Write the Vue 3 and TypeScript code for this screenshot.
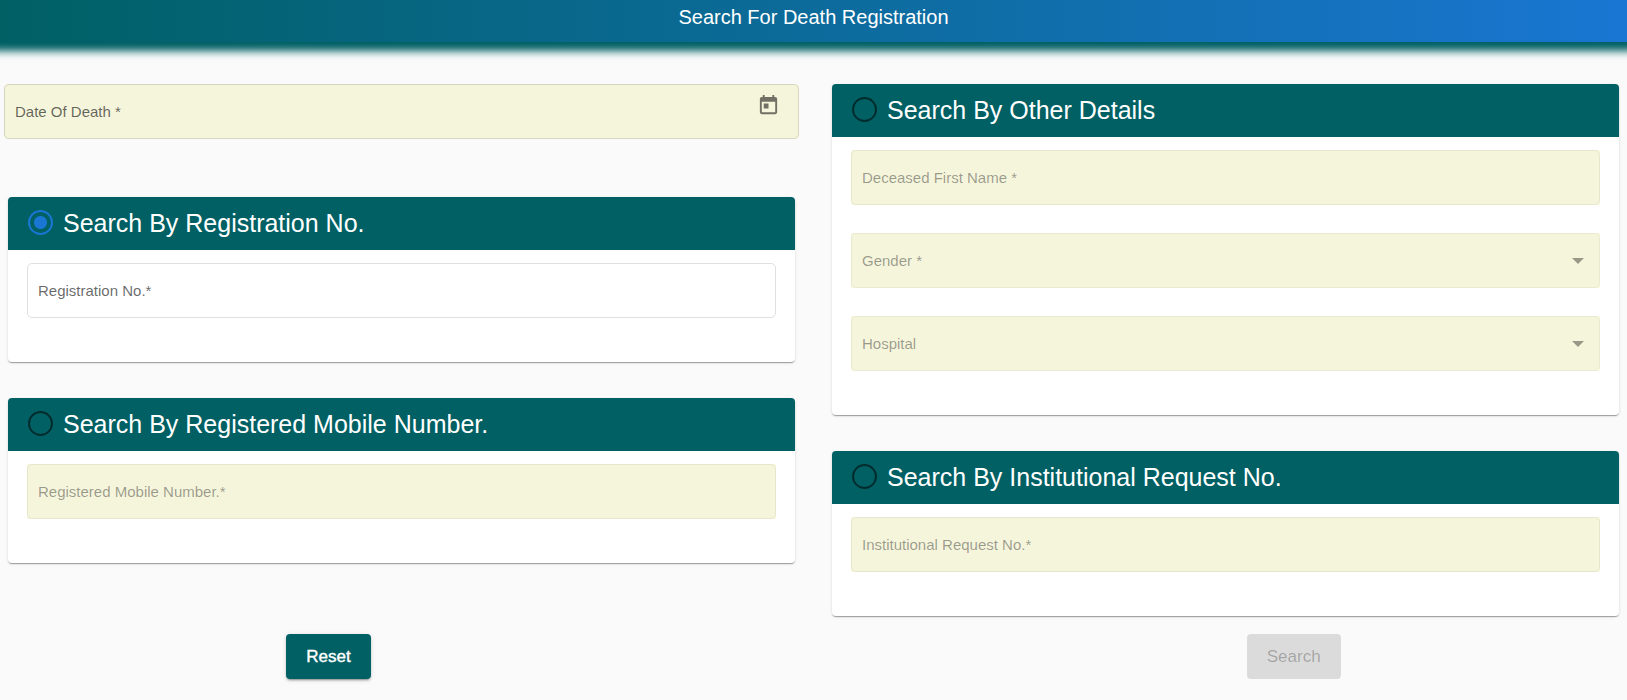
<script setup lang="ts">
import { computed, reactive, ref } from 'vue'

type Mode = 'registration' | 'mobile' | 'details' | 'institution'
type FieldKey = 'registrationNo' | 'mobileNo' | 'firstName' | 'gender' | 'hospital' | 'requestNo'

interface Field {
  key: FieldKey
  label: string
  options?: string[]
}

interface Panel {
  mode: Mode
  title: string
  fields: Field[]
}

const leftPanels: Panel[] = [
  {
    mode: 'registration',
    title: 'Search By Registration No.',
    fields: [{ key: 'registrationNo', label: 'Registration No.*' }],
  },
  {
    mode: 'mobile',
    title: 'Search By Registered Mobile Number.',
    fields: [{ key: 'mobileNo', label: 'Registered Mobile Number.*' }],
  },
]

const rightPanels: Panel[] = [
  {
    mode: 'details',
    title: 'Search By Other Details',
    fields: [
      { key: 'firstName', label: 'Deceased First Name *' },
      { key: 'gender', label: 'Gender *', options: [] },
      { key: 'hospital', label: 'Hospital', options: [] },
    ],
  },
  {
    mode: 'institution',
    title: 'Search By Institutional Request No.',
    fields: [{ key: 'requestNo', label: 'Institutional Request No.*' }],
  },
]

const columns = [leftPanels, rightPanels]

const mode = ref<Mode>('registration')
const dateOfDeath = ref('')
const values = reactive<Record<FieldKey, string>>({
  registrationNo: '',
  mobileNo: '',
  firstName: '',
  gender: '',
  hospital: '',
  requestNo: '',
})

const canSearch = computed(() => {
  if (!dateOfDeath.value) return false
  switch (mode.value) {
    case 'registration':
      return values.registrationNo !== ''
    case 'mobile':
      return values.mobileNo !== ''
    case 'details':
      return values.firstName !== '' && values.gender !== ''
    default:
      return values.requestNo !== ''
  }
})

function reset() {
  mode.value = 'registration'
  dateOfDeath.value = ''
  for (const key of Object.keys(values) as FieldKey[]) values[key] = ''
}
</script>

<template>
  <div class="page">
    <header class="banner">
      <h1>Search For Death Registration</h1>
    </header>

    <form @submit.prevent>
      <div class="columns">
        <div v-for="(panels, index) in columns" :key="index" class="column">
          <div v-if="index === 0" class="field date shaded">
            <input id="dateOfDeath" v-model="dateOfDeath" type="text" />
            <label v-show="!dateOfDeath" for="dateOfDeath">Date Of Death *</label>
            <button type="button" class="calendar" aria-label="Open calendar">
              <svg viewBox="0 0 24 24" aria-hidden="true">
                <path
                  d="M19 3h-1V1h-2v2H8V1H6v2H5c-1.11 0-1.99.9-1.99 2L3 19c0 1.1.89 2 2 2h14c1.1 0 2-.9 2-2V5c0-1.1-.9-2-2-2zm0 16H5V8h14v11zM7 10h5v5H7z"
                />
              </svg>
            </button>
          </div>

          <section v-for="panel in panels" :key="panel.mode" class="card">
            <div class="card-head">
              <input :id="panel.mode" v-model="mode" type="radio" name="mode" :value="panel.mode" />
              <label :for="panel.mode">{{ panel.title }}</label>
            </div>
            <div class="card-body">
              <div
                v-for="field in panel.fields"
                :key="field.key"
                class="field"
                :class="{ shaded: mode !== panel.mode, disabled: mode !== panel.mode }"
              >
                <select
                  v-if="field.options"
                  :id="field.key"
                  v-model="values[field.key]"
                  :disabled="mode !== panel.mode"
                >
                  <option v-for="option in field.options" :key="option">{{ option }}</option>
                </select>
                <input
                  v-else
                  :id="field.key"
                  v-model="values[field.key]"
                  type="text"
                  :disabled="mode !== panel.mode"
                />
                <label v-show="!values[field.key]" :for="field.key">{{ field.label }}</label>
                <span v-if="field.options" class="arrow"></span>
              </div>
            </div>
          </section>
        </div>
      </div>

      <div class="actions">
        <button type="button" class="reset" @click="reset">Reset</button>
        <button type="submit" class="search" :disabled="!canSearch">Search</button>
      </div>
    </form>
  </div>
</template>

<style>
body {
  margin: 0;
  background: #fafafa;
}
</style>

<style scoped>
.page {
  min-height: 100vh;
  overflow-x: hidden;
}

.page,
.page input,
.page select,
.page button {
  font-family: Arial, 'Liberation Sans', sans-serif;
}

.page * {
  box-sizing: border-box;
}

.banner {
  height: 42px;
  background: linear-gradient(to right, #006064, #1976d2);
  box-shadow: 0 0 8px 9px #006064;
  text-align: center;
}

.banner h1 {
  margin: 0;
  font-size: 20px;
  line-height: 34px;
  font-weight: 400;
  color: #fff;
}

.columns {
  display: grid;
  grid-template-columns: 1fr 1fr;
  column-gap: 29px;
  padding: 42px 4px 0;
}

.column {
  display: flex;
  flex-direction: column;
  gap: 36px;
}

.card {
  margin: 0 4px;
  background: #fff;
  border-radius: 4px;
  box-shadow:
    0 2px 1px -1px rgba(0, 0, 0, 0.2),
    0 1px 1px rgba(0, 0, 0, 0.14),
    0 1px 3px rgba(0, 0, 0, 0.12);
}

.card-head {
  display: flex;
  align-items: center;
  gap: 10px;
  height: 53px;
  padding: 0 20px 2px;
  border-radius: 4px 4px 0 0;
  background: #006064;
  color: #fff;
  font-size: 25px;
  line-height: 32px;
}

.card-head input {
  appearance: none;
  flex: none;
  width: 25px;
  height: 25px;
  margin: 0;
  border: 2px solid rgba(0, 0, 0, 0.54);
  border-radius: 50%;
}

.card-head input:checked {
  border-color: #1976d2;
  background: radial-gradient(circle, #1976d2 6px, transparent 7px);
}

.card-body {
  display: flex;
  flex-direction: column;
  gap: 28px;
  padding: 13px 19px 44px;
}

.field {
  display: grid;
  height: 55px;
  border-radius: 2px;
  font-size: 15px;
}

.field > * {
  grid-area: 1 / 1;
}

.field.shaded {
  background: #f5f5dc;
}

.field.date {
  margin-bottom: 22px;
  border-radius: 4px;
}

.field input,
.field select {
  appearance: none;
  width: 100%;
  height: 100%;
  padding: 0 11px;
  border: 1px solid rgba(0, 0, 0, 0.12);
  border-radius: 5px;
  background: transparent;
  font-size: 15px;
  color: rgba(0, 0, 0, 0.87);
}

.field.disabled input,
.field.disabled select {
  border-color: rgba(0, 0, 0, 0.06);
}

.field label {
  align-self: center;
  justify-self: start;
  padding-left: 11px;
  line-height: 18px;
  color: rgba(0, 0, 0, 0.6);
  pointer-events: none;
}

.field.disabled label {
  color: rgba(0, 0, 0, 0.38);
}

.calendar {
  justify-self: end;
  width: 23px;
  height: 23px;
  margin: 10px 19px 0 0;
  padding: 0;
  border: 0;
  background: none;
}

.calendar svg {
  display: block;
  width: 23px;
  height: 23px;
  fill: rgba(0, 0, 0, 0.54);
}

.arrow {
  align-self: center;
  justify-self: end;
  margin-right: 16px;
  border-top: 6px solid rgba(0, 0, 0, 0.38);
  border-left: 6px solid transparent;
  border-right: 6px solid transparent;
  pointer-events: none;
}

.actions {
  display: flex;
  justify-content: space-between;
  padding: 18px 17.6% 21px;
}

.actions button {
  height: 45px;
  padding: 0 20px;
  border: 0;
  border-radius: 4px;
  font-size: 17px;
}

.actions .reset {
  background: #006064;
  color: #fff;
  -webkit-text-stroke: 0.4px #fff;
  box-shadow:
    0 3px 1px -2px rgba(0, 0, 0, 0.2),
    0 2px 2px rgba(0, 0, 0, 0.14),
    0 1px 5px rgba(0, 0, 0, 0.12);
}

.actions .search {
  background: #006064;
  color: #fff;
}

.actions .search:disabled {
  background: rgba(0, 0, 0, 0.12);
  color: rgba(0, 0, 0, 0.26);
}
</style>
